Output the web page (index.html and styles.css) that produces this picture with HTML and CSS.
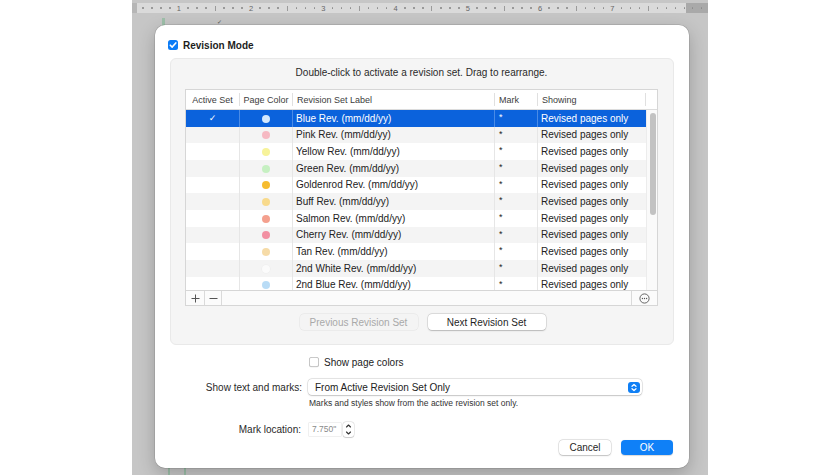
FILE: index.html
```html
<!DOCTYPE html>
<html>
<head>
<meta charset="utf-8">
<title>Revision Mode</title>
<link rel="stylesheet" href="styles.css">
</head>
<body>
<div class="screen">
  <div class="app">
    <div class="ruler">
      <div class="cap-l"></div>
      <div class="band">
        <span class="c d"></span><span class="c d"></span><span class="c d"></span><span class="c d"></span><span class="c n">1</span><span class="c d"></span><span class="c d"></span><span class="c d"></span>
        <span class="c b"></span><span class="c d"></span><span class="c d"></span><span class="c d"></span><span class="c n">2</span><span class="c d"></span><span class="c d"></span><span class="c d"></span>
        <span class="c b"></span><span class="c d"></span><span class="c d"></span><span class="c d"></span><span class="c n">3</span><span class="c d"></span><span class="c d"></span><span class="c d"></span>
        <span class="c b"></span><span class="c d"></span><span class="c d"></span><span class="c d"></span><span class="c n">4</span><span class="c d"></span><span class="c d"></span><span class="c d"></span>
        <span class="c b"></span><span class="c d"></span><span class="c d"></span><span class="c d"></span><span class="c n">5</span><span class="c d"></span><span class="c d"></span><span class="c d"></span>
        <span class="c b"></span><span class="c d"></span><span class="c d"></span><span class="c d"></span><span class="c n">6</span><span class="c d"></span><span class="c d"></span><span class="c d"></span>
        <span class="c b"></span><span class="c d"></span><span class="c d"></span><span class="c d"></span><span class="c n">7</span><span class="c d"></span><span class="c d"></span><span class="c d"></span>
        <span class="c b"></span><span class="c d"></span><span class="c d"></span><span class="c d"></span><span class="c d"></span>
      </div>
      <div class="cap-r"><span class="c d"></span><span class="c d"></span></div>
    </div>
    <div class="doc">
      <div class="doc-top"><span class="gbar"></span><span class="doc-tick">✓</span></div>
      <div class="doc-bottom"><span class="gbar2"></span><span class="gbar2"></span></div>
    </div>
  </div>

  <div class="dialog">
    <div class="title">
      <span class="cb on"><svg width="10" height="10" viewBox="0 0 10 10"><path d="M2.3 5.2 L4.2 7.1 L7.8 2.9" fill="none" stroke="#fff" stroke-width="1.6" stroke-linecap="round" stroke-linejoin="round"/></svg></span>
      <span class="title-text">Revision Mode</span>
    </div>

    <div class="box">
      <p class="hint">Double-click to activate a revision set. Drag to rearrange.</p>
      <div class="table">
        <div class="thead">
          <div class="th center">Active Set</div>
          <div class="th center">Page Color</div>
          <div class="th">Revision Set Label</div>
          <div class="th">Mark</div>
          <div class="th">Showing</div>
          <div class="th last"></div>
        </div>
        <div class="tbody">
          <div class="rows">
            <div class="row sel"><div class="td center check">✓</div><div class="td center"><span class="dot c-blue"></span></div><div class="td label">Blue Rev. (mm/dd/yy)</div><div class="td mark">*</div><div class="td show">Revised pages only</div></div>
            <div class="row alt"><div class="td"></div><div class="td center"><span class="dot c-pink"></span></div><div class="td label">Pink Rev. (mm/dd/yy)</div><div class="td mark">*</div><div class="td show">Revised pages only</div></div>
            <div class="row"><div class="td"></div><div class="td center"><span class="dot c-yellow"></span></div><div class="td label">Yellow Rev. (mm/dd/yy)</div><div class="td mark">*</div><div class="td show">Revised pages only</div></div>
            <div class="row alt"><div class="td"></div><div class="td center"><span class="dot c-green"></span></div><div class="td label">Green Rev. (mm/dd/yy)</div><div class="td mark">*</div><div class="td show">Revised pages only</div></div>
            <div class="row"><div class="td"></div><div class="td center"><span class="dot c-golden"></span></div><div class="td label">Goldenrod Rev. (mm/dd/yy)</div><div class="td mark">*</div><div class="td show">Revised pages only</div></div>
            <div class="row alt"><div class="td"></div><div class="td center"><span class="dot c-buff"></span></div><div class="td label">Buff Rev. (mm/dd/yy)</div><div class="td mark">*</div><div class="td show">Revised pages only</div></div>
            <div class="row"><div class="td"></div><div class="td center"><span class="dot c-salmon"></span></div><div class="td label">Salmon Rev. (mm/dd/yy)</div><div class="td mark">*</div><div class="td show">Revised pages only</div></div>
            <div class="row alt"><div class="td"></div><div class="td center"><span class="dot c-cherry"></span></div><div class="td label">Cherry Rev. (mm/dd/yy)</div><div class="td mark">*</div><div class="td show">Revised pages only</div></div>
            <div class="row"><div class="td"></div><div class="td center"><span class="dot c-tan"></span></div><div class="td label">Tan Rev. (mm/dd/yy)</div><div class="td mark">*</div><div class="td show">Revised pages only</div></div>
            <div class="row alt"><div class="td"></div><div class="td center"><span class="dot c-white"></span></div><div class="td label">2nd White Rev. (mm/dd/yy)</div><div class="td mark">*</div><div class="td show">Revised pages only</div></div>
            <div class="row"><div class="td"></div><div class="td center"><span class="dot c-blue2"></span></div><div class="td label">2nd Blue Rev. (mm/dd/yy)</div><div class="td mark">*</div><div class="td show">Revised pages only</div></div>
          </div>
          <div class="scroll"><div class="thumb"></div></div>
        </div>
        <div class="tfoot">
          <span class="fbtn plus"><svg width="9" height="9" viewBox="0 0 9 9"><path d="M4.5 0.5 V8.5 M0.5 4.5 H8.5" stroke="#555" stroke-width="1"/></svg></span>
          <span class="fbtn minus"><svg width="9" height="9" viewBox="0 0 9 9"><path d="M0.5 4.5 H8.5" stroke="#555" stroke-width="1"/></svg></span>
          <span class="fspace"></span>
          <span class="fbtn more"><svg width="11" height="11" viewBox="0 0 11 11"><circle cx="5.5" cy="5.5" r="4.6" fill="none" stroke="#555" stroke-width="0.9"/><circle cx="3.4" cy="5.5" r="0.65" fill="#555"/><circle cx="5.5" cy="5.5" r="0.65" fill="#555"/><circle cx="7.6" cy="5.5" r="0.65" fill="#555"/></svg></span>
        </div>
      </div>
      <div class="navbtns">
        <span class="btn nav disabled">Previous Revision Set</span>
        <span class="btn nav">Next Revision Set</span>
      </div>
    </div>

    <div class="form">
      <span></span>
      <div class="check-row"><span class="cb off"></span><span>Show page colors</span></div>

      <span class="flabel tm">Show text and marks:</span>
      <div class="popup">
        <span>From Active Revision Set Only</span>
        <span class="popup-arrows"><svg width="12" height="11" viewBox="0 0 12 11"><path d="M4 4.3 L6 2.5 L8 4.3 M4 6.7 L6 8.5 L8 6.7" fill="none" stroke="#fff" stroke-width="1.2" stroke-linecap="round" stroke-linejoin="round"/></svg></span>
      </div>

      <span></span>
      <p class="help">Marks and styles show from the active revision set only.</p>

      <span class="flabel mloc">Mark location:</span>
      <div class="mark-row">
        <span class="field">7.750"</span>
        <span class="stepper"><svg width="11" height="15" viewBox="0 0 11 15"><path d="M3.5 5 L5.5 3 L7.5 5 M3.5 10 L5.5 12 L7.5 10" fill="none" stroke="#333" stroke-width="1.1" stroke-linecap="round" stroke-linejoin="round"/></svg></span>
      </div>
    </div>

    <div class="actions">
      <span class="btn act">Cancel</span>
      <span class="btn act ok">OK</span>
    </div>
  </div>
</div>
</body>
</html>
```

FILE: styles.css
```css
html, body {
  margin: 0;
  padding: 0;
}
body {
  width: 840px;
  height: 475px;
  overflow: hidden;
  background: #ffffff;
  font-family: "Liberation Sans", Arial, sans-serif;
  font-size: 10px;
  color: #222;
}
.screen {
  position: relative;
  width: 840px;
  height: 475px;
  display: flex;
}
.app {
  margin-left: 132px;
  width: 576px;
  height: 475px;
  background: #c6c6c6;
  display: flex;
  flex-direction: column;
}
.ruler {
  height: 16px;
  display: flex;
  align-items: flex-start;
  padding-top: 3px;
  box-sizing: border-box;
}
.cap-l {
  width: 5px;
  height: 10px;
  background: #b6b6b6;
}
.band {
  width: 551px;
  height: 10px;
  background: #dadada;
  display: flex;
  padding-left: 1.3px;
  box-sizing: border-box;
  overflow: hidden;
}
.cap-r {
  width: 20px;
  height: 10px;
  background: #a9a9a9;
  display: flex;
  padding-left: 2px;
}
.c {
  flex: 0 0 9.04px;
  height: 10px;
  display: flex;
  align-items: center;
  justify-content: center;
}
.d::after {
  content: "";
  width: 1.6px;
  height: 1.6px;
  border-radius: 50%;
  background: #8c8c8c;
}
.b::after {
  content: "";
  width: 1px;
  height: 5px;
  background: #9a9a9a;
}
.n {
  font-size: 7.5px;
  color: #666;
}
.doc {
  flex: 1;
  display: flex;
  flex-direction: column;
  justify-content: space-between;
}
.doc-top {
  display: flex;
  align-items: center;
  height: 12px;
  margin-top: 1px;
}
.gbar {
  width: 3px;
  height: 10px;
  margin-left: 30px;
  background: #9dbfa9;
}
.doc-tick {
  margin-left: 52px;
  font-family: "DejaVu Sans", sans-serif;
  font-size: 6px;
  color: #555;
  margin-top: -4px;
}
.doc-bottom {
  display: flex;
  height: 7px;
  margin-left: 36px;
  gap: 14px;
}
.gbar2 {
  width: 2px;
  height: 7px;
  background: #9dbfa9;
}

/* dialog sheet */
.dialog {
  position: absolute;
  left: 155px;
  top: 25px;
  width: 534px;
  height: 443px;
  box-sizing: border-box;
  background: #ffffff;
  border-radius: 10px;
  box-shadow: 0 0 0 0.5px rgba(0,0,0,0.18), 0 6px 18px rgba(0,0,0,0.22);
  padding: 14px 16px 0 13px;
  display: flex;
  flex-direction: column;
}
.title {
  display: flex;
  align-items: center;
  height: 12px;
}
.title-text {
  font-weight: bold;
  margin-left: 5px;
  color: #1d1d1d;
}
.cb {
  width: 10px;
  height: 10px;
  box-sizing: border-box;
  border-radius: 2.5px;
  display: inline-flex;
  flex: 0 0 auto;
}
.cb.on {
  background: #0c7cf6;
}
.cb.off {
  background: #fff;
  box-shadow: inset 0 0 0 0.8px #b9b9b9, 0 0.5px 0.5px rgba(0,0,0,0.08);
}

.box {
  margin-top: 7px;
  margin-left: 2px;
  width: 504px;
  box-sizing: border-box;
  background: #f5f5f5;
  border: 1px solid #e9e9e9;
  border-radius: 6px;
  padding: 8px 15px 14px 14px;
}
.hint {
  margin: 0;
  height: 12px;
  line-height: 12px;
  text-align: center;
  color: #2a2a2a;
}
.table {
  margin-top: 10px;
  width: 473px;
  box-sizing: border-box;
  border: 1px solid #d6d6d6;
  background: #ffffff;
  display: flex;
  flex-direction: column;
}
.thead {
  display: grid;
  grid-template-columns: 54px 53px 202px 43px 108px 11px;
  height: 20px;
  border-bottom: 1px solid #dcdcdc;
  box-sizing: border-box;
}
.th {
  font-size: 9px;
  color: #3d3d3d;
  display: flex;
  align-items: center;
  padding-left: 4px;
  border-right: 1px solid #e0e0e0;
  margin: 3px 0;
  white-space: nowrap;
}
.th.center {
  justify-content: center;
  padding-left: 0;
}
.th.last {
  border-right: none;
}
.tbody {
  display: flex;
  height: 180px;
  overflow: hidden;
}
.rows {
  width: 460px;
  overflow: hidden;
}
.row {
  display: grid;
  grid-template-columns: 54px 53px 202px 43px 108px;
  height: 16.67px;
  background: #ffffff;
}
.row.alt {
  background: #f4f4f4;
}
.row.sel {
  background: #0b62dc;
  color: #ffffff;
}
.td {
  display: flex;
  align-items: center;
  border-right: 1px solid #e6e6e6;
  padding-left: 3px;
  white-space: nowrap;
  overflow: hidden;
}
.row.sel .td {
  border-right-color: #4a8be6;
}
.td.center {
  justify-content: center;
  padding-left: 0;
}
.td.mark {
  padding-left: 4px;
  align-items: flex-start;
  padding-top: 2px;
  font-size: 9px;
}
.td.show {
  border-right: none;
}
.check {
  font-family: "DejaVu Sans", sans-serif;
  font-size: 9px;
}
.dot {
  width: 8px;
  height: 8px;
  border-radius: 50%;
  margin-top: 1px;
}
.c-blue { background: #d4e9fe; }
.c-pink { background: #f6b9c2; }
.c-yellow { background: #f7f39a; }
.c-green { background: #c6f0c2; }
.c-golden { background: #f6bc2f; }
.c-buff { background: #f8da8c; }
.c-salmon { background: #f4a08e; }
.c-cherry { background: #f290a2; }
.c-tan { background: #f6dba7; }
.c-white { background: #fbfbfb; box-shadow: 0 0 0 0.5px #ececec; }
.c-blue2 { background: #b9dcf6; }
.scroll {
  width: 11px;
  border-left: 1px solid #ececec;
  background: #fafafa;
  box-sizing: border-box;
}
.thumb {
  width: 6px;
  height: 102px;
  margin: 3px 0 0 2.5px;
  border-radius: 3px;
  background: #c2c2c2;
}
.tfoot {
  height: 15px;
  border-top: 1px solid #d6d6d6;
  box-sizing: border-box;
  display: flex;
  background: #fbfbfb;
}
.fbtn {
  display: flex;
  align-items: center;
  justify-content: center;
}
.fbtn.plus {
  width: 18px;
  border-right: 1px solid #dadada;
}
.fbtn.minus {
  width: 16px;
  border-right: 1px solid #dadada;
}
.fspace {
  flex: 1;
}
.fbtn.more {
  width: 25px;
  border-left: 1px solid #dadada;
}

.navbtns {
  margin-top: 8px;
  display: flex;
  justify-content: center;
  gap: 10px;
  padding-left: 2px;
}
.btn {
  display: flex;
  align-items: center;
  justify-content: center;
  box-sizing: border-box;
  border-radius: 4px;
  background: #ffffff;
  box-shadow: 0 0 0 0.5px rgba(0,0,0,0.16), 0 0.5px 1.5px rgba(0,0,0,0.18);
  color: #1f1f1f;
}
.btn.nav {
  width: 118px;
  height: 16px;
}
.btn.disabled {
  background: #f4f4f4;
  color: #a9a9a9;
  box-shadow: 0 0 0 0.5px rgba(0,0,0,0.08);
}

.form {
  margin-top: 11px;
  display: grid;
  grid-template-columns: 134px 334px;
  column-gap: 6px;
  align-items: center;
}
.flabel {
  text-align: right;
  white-space: nowrap;
  color: #2a2a2a;
}
.flabel.tm {
  margin-top: 11px;
}
.check-row {
  display: flex;
  align-items: center;
  height: 12px;
  margin-left: 1px;
}
.check-row .cb {
  margin-right: 5px;
}
.popup {
  margin-top: 11px;
  height: 16px;
  box-sizing: border-box;
  border-radius: 4px;
  background: #ffffff;
  box-shadow: 0 0 0 0.5px rgba(0,0,0,0.16), 0 0.5px 1.5px rgba(0,0,0,0.16);
  display: flex;
  align-items: center;
  justify-content: space-between;
  padding: 0 2px 0 7px;
}
.popup-arrows {
  width: 12px;
  height: 11px;
  border-radius: 3px;
  background: #0f7ff5;
  display: flex;
}
.help {
  margin: 3px 0 0 1px;
  font-size: 8.5px;
  line-height: 11px;
  color: #333;
}
.flabel.mloc {
  margin-top: 13px;
  padding-right: 1px;
}
.mark-row {
  margin-top: 13px;
  display: flex;
  align-items: center;
  gap: 2px;
  margin-left: 1px;
}
.field {
  width: 32px;
  height: 13px;
  box-sizing: border-box;
  padding-left: 3px;
  font-size: 8.5px;
  line-height: 13px;
  color: #8a8a8a;
  background: #fff;
  box-shadow: 0 0 0 0.5px #e2e2e2;
}
.stepper {
  width: 11px;
  height: 15px;
  border-radius: 3px;
  background: #fff;
  box-shadow: 0 0 0 0.5px rgba(0,0,0,0.14), 0 0.5px 1px rgba(0,0,0,0.14);
  display: flex;
}
.actions {
  margin-top: 3px;
  display: flex;
  justify-content: flex-end;
  gap: 10px;
}
.btn.act {
  width: 52px;
  height: 15px;
}
.btn.ok {
  background: #0f80f7;
  color: #ffffff;
  box-shadow: 0 0.5px 1px rgba(0,0,0,0.15);
}
```
